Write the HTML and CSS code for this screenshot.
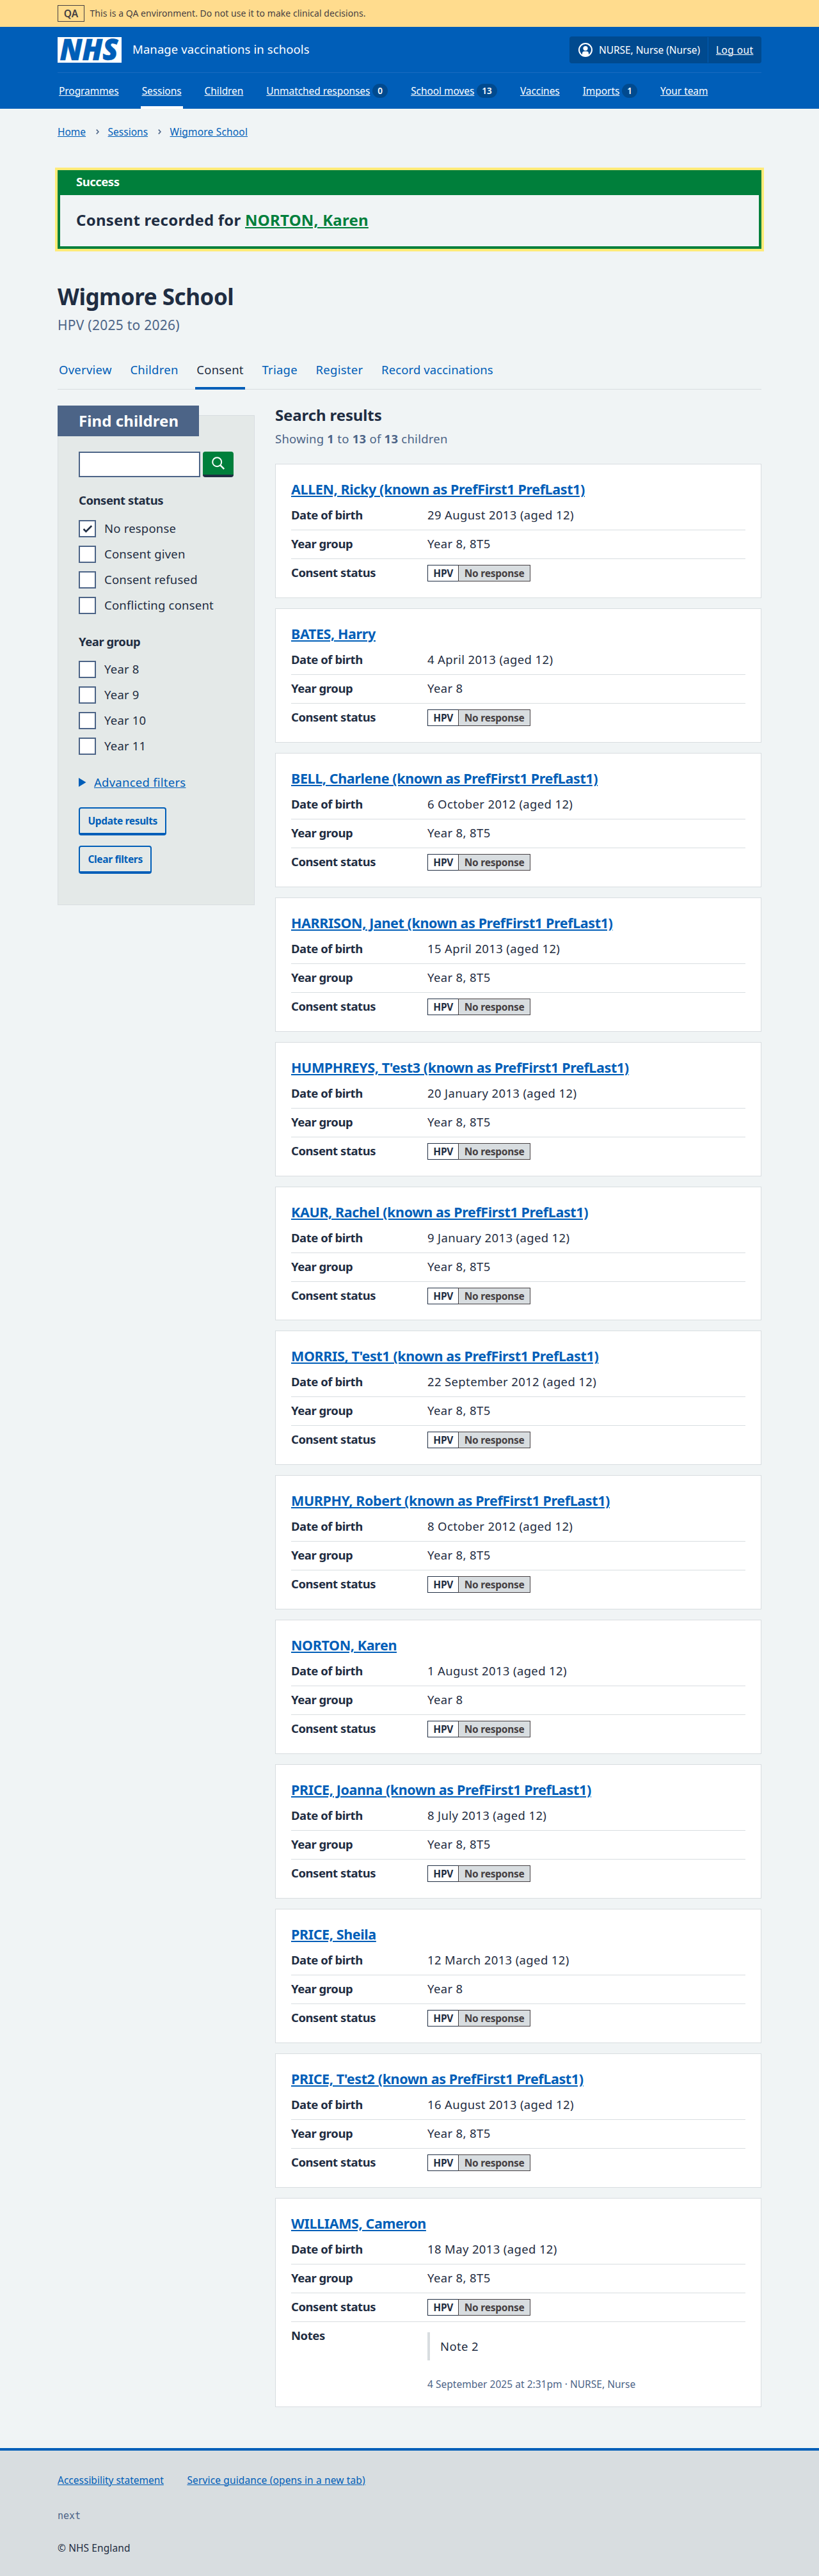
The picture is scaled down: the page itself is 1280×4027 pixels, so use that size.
FILE: index.html
```html
<!DOCTYPE html>
<html lang="en">
<head>
<meta charset="utf-8">
<title>Wigmore School – Manage vaccinations in schools</title>
<link rel="stylesheet" href="styles.css">
</head>
<body>
<div class="environment">
  <div class="container environment-inner">
    <strong class="environment-tag">QA</strong>
    <span>This is a QA environment. Do not use it to make clinical decisions.</span>
  </div>
</div>
<header class="header">
  <div class="container">
    <div class="header-top">
      <svg class="logo" width="100" height="40" viewBox="0 0 100 40" role="img" aria-label="NHS">
        <rect width="100" height="40" fill="#fff"/>
        <text x="3.5" y="36.4" textLength="91" lengthAdjust="spacingAndGlyphs" class="logo-text">NHS</text>
      </svg>
      <span class="service">Manage vaccinations in schools</span>
      <div class="account">
        <span class="account-user">
          <svg width="22" height="22" viewBox="0 0 22 22" aria-hidden="true">
            <defs><clipPath id="ring"><circle cx="11" cy="11" r="10"/></clipPath></defs>
            <circle cx="11" cy="11" r="10" fill="none" stroke="#fff" stroke-width="2"/>
            <g clip-path="url(#ring)" fill="#fff"><circle cx="11" cy="8.6" r="3.6"/><path d="M6 22v-5.4a3.4 3.4 0 0 1 3.4-3.4h3.2a3.4 3.4 0 0 1 3.4 3.4V22z"/></g>
          </svg>
          NURSE, Nurse (Nurse)
        </span>
        <a class="account-logout" href="#">Log out</a>
      </div>
    </div>
    <nav class="nav">
      <div class="nav-item"><a href="#">Programmes</a></div>
      <div class="nav-item current"><a href="#">Sessions</a></div>
      <div class="nav-item"><a href="#">Children</a></div>
      <div class="nav-item"><a href="#">Unmatched responses</a><span class="badge">0</span></div>
      <div class="nav-item"><a href="#">School moves</a><span class="badge">13</span></div>
      <div class="nav-item"><a href="#">Vaccines</a></div>
      <div class="nav-item"><a href="#">Imports</a><span class="badge">1</span></div>
      <div class="nav-item"><a href="#">Your team</a></div>
    </nav>
  </div>
</header>
<div class="container page">
  <nav class="breadcrumb">
    <a href="#">Home</a>
    <svg width="5" height="8" viewBox="0 0 5 8" aria-hidden="true"><path d="M.8.6 4 4 .8 7.4" fill="none" stroke="#4c6487" stroke-width="1.6"/></svg>
    <a href="#">Sessions</a>
    <svg width="5" height="8" viewBox="0 0 5 8" aria-hidden="true"><path d="M.8.6 4 4 .8 7.4" fill="none" stroke="#4c6487" stroke-width="1.6"/></svg>
    <a href="#">Wigmore School</a>
  </nav>
  <section class="notification">
    <h2 class="notification-title">Success</h2>
    <p class="notification-body">Consent recorded for <a href="#">NORTON, Karen</a></p>
  </section>
  <h1 class="title">Wigmore School</h1>
  <p class="caption">HPV (2025 to 2026)</p>
  <nav class="tabs">
    <a href="#">Overview</a><a href="#">Children</a><a href="#" class="current">Consent</a><a href="#">Triage</a><a href="#">Register</a><a href="#">Record vaccinations</a>
  </nav>
  <div class="columns">
    <aside class="filters">
      <h2 class="filters-title">Find children</h2>
      <div class="search">
        <input type="text" class="search-input" aria-label="Search">
        <button class="search-button" aria-label="Search">
          <svg width="20" height="20" viewBox="0 0 20 20" aria-hidden="true"><circle cx="8.2" cy="8.2" r="7" fill="none" stroke="#fff" stroke-width="2"/><path d="m13.2 13.2 6 6" stroke="#fff" stroke-width="2.4"/></svg>
        </button>
      </div>
      <h3 class="legend">Consent status</h3>
      <div class="options">
        <label class="option"><span class="box"><svg width="16" height="13" viewBox="0 0 16 13" aria-hidden="true"><path d="m1.6 7 3.8 3.8L14.2 2" fill="none" stroke="#1f2d42" stroke-width="2.6"/></svg></span>No response</label>
        <label class="option"><span class="box"></span>Consent given</label>
        <label class="option"><span class="box"></span>Consent refused</label>
        <label class="option"><span class="box"></span>Conflicting consent</label>
      </div>
      <h3 class="legend legend-next">Year group</h3>
      <div class="options">
        <label class="option"><span class="box"></span>Year 8</label>
        <label class="option"><span class="box"></span>Year 9</label>
        <label class="option"><span class="box"></span>Year 10</label>
        <label class="option"><span class="box"></span>Year 11</label>
      </div>
      <div class="advanced"><svg width="12" height="14" viewBox="0 0 12 14" aria-hidden="true"><path d="M0 0l11.5 7L0 14z" fill="#005eb8"/></svg><a href="#">Advanced filters</a></div>
      <div class="actions">
        <button class="button">Update results</button>
        <button class="button">Clear filters</button>
      </div>
    </aside>
    <main class="results">
      <h2 class="results-title">Search results</h2>
      <p class="results-count">Showing <b>1</b> to <b>13</b> of <b>13</b> children</p>
      <div class="cards">
        <article class="card"><h3><a href="#">ALLEN, Ricky (known as PrefFirst1 PrefLast1)</a></h3><dl><div><dt>Date of birth</dt><dd>29 August 2013 (aged 12)</dd></div><div><dt>Year group</dt><dd>Year 8, 8T5</dd></div><div><dt>Consent status</dt><dd><span class="tag"><b>HPV</b><b class="status">No response</b></span></dd></div></dl></article>
        <article class="card"><h3><a href="#">BATES, Harry</a></h3><dl><div><dt>Date of birth</dt><dd>4 April 2013 (aged 12)</dd></div><div><dt>Year group</dt><dd>Year 8</dd></div><div><dt>Consent status</dt><dd><span class="tag"><b>HPV</b><b class="status">No response</b></span></dd></div></dl></article>
        <article class="card"><h3><a href="#">BELL, Charlene (known as PrefFirst1 PrefLast1)</a></h3><dl><div><dt>Date of birth</dt><dd>6 October 2012 (aged 12)</dd></div><div><dt>Year group</dt><dd>Year 8, 8T5</dd></div><div><dt>Consent status</dt><dd><span class="tag"><b>HPV</b><b class="status">No response</b></span></dd></div></dl></article>
        <article class="card"><h3><a href="#">HARRISON, Janet (known as PrefFirst1 PrefLast1)</a></h3><dl><div><dt>Date of birth</dt><dd>15 April 2013 (aged 12)</dd></div><div><dt>Year group</dt><dd>Year 8, 8T5</dd></div><div><dt>Consent status</dt><dd><span class="tag"><b>HPV</b><b class="status">No response</b></span></dd></div></dl></article>
        <article class="card"><h3><a href="#">HUMPHREYS, T'est3 (known as PrefFirst1 PrefLast1)</a></h3><dl><div><dt>Date of birth</dt><dd>20 January 2013 (aged 12)</dd></div><div><dt>Year group</dt><dd>Year 8, 8T5</dd></div><div><dt>Consent status</dt><dd><span class="tag"><b>HPV</b><b class="status">No response</b></span></dd></div></dl></article>
        <article class="card"><h3><a href="#">KAUR, Rachel (known as PrefFirst1 PrefLast1)</a></h3><dl><div><dt>Date of birth</dt><dd>9 January 2013 (aged 12)</dd></div><div><dt>Year group</dt><dd>Year 8, 8T5</dd></div><div><dt>Consent status</dt><dd><span class="tag"><b>HPV</b><b class="status">No response</b></span></dd></div></dl></article>
        <article class="card"><h3><a href="#">MORRIS, T'est1 (known as PrefFirst1 PrefLast1)</a></h3><dl><div><dt>Date of birth</dt><dd>22 September 2012 (aged 12)</dd></div><div><dt>Year group</dt><dd>Year 8, 8T5</dd></div><div><dt>Consent status</dt><dd><span class="tag"><b>HPV</b><b class="status">No response</b></span></dd></div></dl></article>
        <article class="card"><h3><a href="#">MURPHY, Robert (known as PrefFirst1 PrefLast1)</a></h3><dl><div><dt>Date of birth</dt><dd>8 October 2012 (aged 12)</dd></div><div><dt>Year group</dt><dd>Year 8, 8T5</dd></div><div><dt>Consent status</dt><dd><span class="tag"><b>HPV</b><b class="status">No response</b></span></dd></div></dl></article>
        <article class="card"><h3><a href="#">NORTON, Karen</a></h3><dl><div><dt>Date of birth</dt><dd>1 August 2013 (aged 12)</dd></div><div><dt>Year group</dt><dd>Year 8</dd></div><div><dt>Consent status</dt><dd><span class="tag"><b>HPV</b><b class="status">No response</b></span></dd></div></dl></article>
        <article class="card"><h3><a href="#">PRICE, Joanna (known as PrefFirst1 PrefLast1)</a></h3><dl><div><dt>Date of birth</dt><dd>8 July 2013 (aged 12)</dd></div><div><dt>Year group</dt><dd>Year 8, 8T5</dd></div><div><dt>Consent status</dt><dd><span class="tag"><b>HPV</b><b class="status">No response</b></span></dd></div></dl></article>
        <article class="card"><h3><a href="#">PRICE, Sheila</a></h3><dl><div><dt>Date of birth</dt><dd>12 March 2013 (aged 12)</dd></div><div><dt>Year group</dt><dd>Year 8</dd></div><div><dt>Consent status</dt><dd><span class="tag"><b>HPV</b><b class="status">No response</b></span></dd></div></dl></article>
        <article class="card"><h3><a href="#">PRICE, T'est2 (known as PrefFirst1 PrefLast1)</a></h3><dl><div><dt>Date of birth</dt><dd>16 August 2013 (aged 12)</dd></div><div><dt>Year group</dt><dd>Year 8, 8T5</dd></div><div><dt>Consent status</dt><dd><span class="tag"><b>HPV</b><b class="status">No response</b></span></dd></div></dl></article>
        <article class="card card-notes"><h3><a href="#">WILLIAMS, Cameron</a></h3><dl><div><dt>Date of birth</dt><dd>18 May 2013 (aged 12)</dd></div><div><dt>Year group</dt><dd>Year 8, 8T5</dd></div><div><dt>Consent status</dt><dd><span class="tag"><b>HPV</b><b class="status">No response</b></span></dd></div><div><dt>Notes</dt><dd><blockquote>Note 2</blockquote><p class="note-meta">4 September 2025 at 2:31pm · NURSE, Nurse</p></dd></div></dl></article>
      </div>
    </main>
  </div>
</div>
<footer class="footer">
  <div class="container">
    <div class="footer-links"><a href="#">Accessibility statement</a><a href="#">Service guidance (opens in a new tab)</a></div>
    <p class="version">next</p>
    <p class="copyright">© NHS England</p>
  </div>
</footer>
</body>
</html>
```
FILE: styles.css
```css
* { box-sizing: border-box; }
body { margin: 0; background: #f0f4f5; color: #1f2d42; font: 400 18.5px/28px "Noto Sans", "Open Sans", sans-serif; letter-spacing: .25px; }
h1, h2, h3, p, dl, dd, blockquote { margin: 0; }
a { color: #005eb8; text-decoration-thickness: 1px; text-underline-offset: 1px; }
button { font-family: inherit; margin: 0; }
svg { flex: none; display: block; }
.container { width: 1100px; margin: 0 auto; }

.environment { background: #ffdc8e; color: #453f42; height: 42px; font-size: 14px; line-height: 24px; letter-spacing: .04px; }
.environment-inner { display: flex; align-items: center; gap: 8.5px; height: 42px; }
.environment-tag { border: 1px solid #453f42; width: 42px; height: 26px; text-align: center; font-size: 15.5px; font-weight: 600; }

.header { background: #005eb8; color: #fff; height: 128px; }
.header a { color: #fff; }
.header-top { display: flex; align-items: center; height: 72px; border-bottom: 1px solid #1a6bc0; }
.logo { overflow: visible; }
.logo-text { font: italic 800 46px "Open Sans", "Noto Sans", sans-serif; letter-spacing: 0; fill: #005eb8; stroke: #005eb8; stroke-width: .6px; }
.service { margin: 0 auto 2px 17px; letter-spacing: .1px; }
.account { display: flex; align-items: stretch; height: 42px; width: 300px; background: #004a8f; border-radius: 4px; font-size: 15.5px; line-height: 42px; letter-spacing: -.06px; }
.account-user { display: flex; align-items: center; gap: 10px; padding-left: 14px; width: 216px; white-space: nowrap; }
.account-logout { flex: 1; margin: 1px 0; border-left: 1px solid #005eb8; line-height: 40px; padding-left: 12px; letter-spacing: .4px; }
.nav { display: flex; gap: 32px; height: 56px; font-size: 15.5px; letter-spacing: -.07px; }
.nav-item { display: flex; align-items: center; padding: 0 2px; white-space: nowrap; }
.nav-item.current { box-shadow: inset 0 -4px #fff; }
.badge { margin-left: 4px; padding: 0 8px; height: 22px; border-radius: 11px; background: #004a8f; font-size: 13.5px; font-weight: 600; line-height: 22px; letter-spacing: .1px; }

.page { padding-top: 24px; }
.breadcrumb { display: flex; align-items: center; height: 24px; font-size: 15.5px; line-height: 24px; letter-spacing: 0; }
.breadcrumb svg { margin: 0 13.5px 0 16px; }
.breadcrumb a:last-child { letter-spacing: .18px; }
.notification { margin-top: 48px; border: 4px solid #007f3b; box-shadow: 0 0 0 4px #ffeb78; height: 123px; }
.notification-title { background: #007f3b; color: #fff; padding: 0 25px 7px; font-size: 18.5px; line-height: 28px; font-weight: 700; letter-spacing: -.5px; }
.notification-body { padding: 23px 25px; font-size: 24px; line-height: 32px; font-weight: 700; letter-spacing: .24px; }
.notification-body a { color: #007f3b; text-decoration-thickness: 2px; text-underline-offset: 2px; }
.title { margin-top: 53px; font-size: 35px; line-height: 44px; font-weight: 700; letter-spacing: -.45px; }
.caption { margin-top: 8px; font-size: 21px; line-height: 28px; color: #4c6487; letter-spacing: .25px; }
.tabs { display: flex; gap: 24.7px; margin-top: 42px; height: 45px; box-shadow: inset 0 -1px #d8dde0; }
.tabs a { padding: 0 2px; text-decoration: none; }
.tabs a:last-child { letter-spacing: .12px; }
.tabs .current { color: #1f2d42; box-shadow: inset 0 -4px #005eb8; }

.columns { display: grid; grid-template-columns: 308px 760px; gap: 32px; align-items: start; }
.filters { margin-top: 40px; height: 766px; padding: 0 32px; border: 1px solid #d8dde0; background: #e4e9e8; }
.filters-title { width: 221px; height: 48px; margin: -16px 0 24px -33px; padding-left: 33px; background: #4c6487; color: #fff; font-size: 24px; line-height: 48px; font-weight: 700; letter-spacing: .08px; white-space: nowrap; }
.search { display: flex; gap: 4px; height: 40px; }
.search-input { width: 190px; height: 40px; border: 2px solid #4c6487; border-radius: 0; background: #fff; padding: 0 4px; }
.search-button { display: grid; place-items: center; width: 48px; height: 40px; border: 0; border-bottom: 4px solid #1f2d42; border-radius: 4px; background: #007f3b; padding: 0; }
.legend { margin: 22px 0 16px; font-size: 18.5px; line-height: 28px; font-weight: 700; letter-spacing: -.45px; }
.legend-next { margin: 29px 0 15px; }
.options { display: grid; gap: 12px; }
.option { display: flex; align-items: center; gap: 13px; height: 28px; letter-spacing: .2px; }
.box { display: grid; place-items: center; width: 27px; height: 27px; border: 2px solid #4c6487; background: #fff; }
.advanced { display: flex; align-items: center; gap: 12px; margin-top: 29px; }
.actions { display: flex; flex-direction: column; align-items: flex-start; gap: 16px; margin-top: 25px; }
.button { height: 44px; padding: 0 12.5px; border: 2px solid #005eb8; border-bottom-width: 4px; border-radius: 4px; background: transparent; color: #005eb8; font-size: 15.5px; font-weight: 700; line-height: 38px; letter-spacing: -.36px; }

.results-title { margin-top: 24px; font-size: 24px; line-height: 32px; font-weight: 700; letter-spacing: -.12px; }
.results-count { margin-top: 7px; color: #4c6487; letter-spacing: .25px; }
.results-count b { font-weight: 700; }
.cards { display: grid; gap: 16px; margin-top: 25px; }
.card { height: 209.92px; padding: 24px; border: 1px solid #d8dde0; background: #fff; }
.card-notes { height: 327px; }
.card h3 { margin-bottom: 4px; font-size: 21.5px; line-height: 30px; font-weight: 700; letter-spacing: -.38px; white-space: nowrap; }
.card h3 a { text-decoration-thickness: 2px; text-underline-offset: 2px; }
.card dl > div { display: grid; grid-template-columns: 213px 1fr; padding: 7px 0 9px; border-bottom: 1px solid #d8dde0; }
.card dl > div:last-child { border-bottom: 0; }
.card dt { font-weight: 700; letter-spacing: -.45px; }
.card dd { height: 28px; letter-spacing: .36px; }
.tag { display: inline-flex; height: 26px; margin-top: 2px; border: 1px solid #1f2d42; font-size: 15.5px; line-height: 24px; letter-spacing: -.25px; vertical-align: top; }
.tag b { padding: 0 8.3px; font-weight: 700; }
.tag .status { margin: -1px; border: 1px solid #453f42; margin-left: 0; background: #d8dde0; color: #453f42; }
blockquote { margin-top: 9px; padding: 8px 0 8px 16px; border-left: 4px solid #d8dde0; }
.note-meta { margin-top: 25px; color: #4c6487; font-size: 15.5px; line-height: 24px; letter-spacing: .03px; }

.footer { margin-top: 64px; height: 200px; border-top: 4px solid #005eb8; background: #d8dde0; font-size: 15.5px; line-height: 24px; letter-spacing: 0; }
.footer-links { display: flex; gap: 36.5px; padding-top: 34px; }
.footer-links a:last-child { letter-spacing: .14px; }
.version { margin-top: 32px; font-family: "DejaVu Sans Mono", "Liberation Mono", monospace; font-size: 15px; letter-spacing: 0; color: #4c6487; }
.copyright { margin-top: 26px; letter-spacing: .1px; }
```
